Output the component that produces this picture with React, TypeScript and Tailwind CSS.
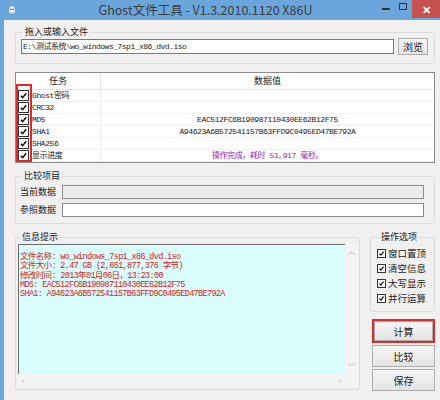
import React from "react";

const ui = "font-['Noto_Sans_CJK_SC','Noto_Sans',sans-serif]";
const mono = "font-['Liberation_Mono','Noto_Sans_CJK_SC',monospace]";

type Row = { name: string; value?: string; purple?: boolean };

const rows: Row[] = [
  { name: "Ghost密码" },
  { name: "CRC32" },
  { name: "MD5", value: "EAC512FC6B190987110430EE62B12F75" },
  { name: "SHA1", value: "A94623A6B572541157B63FFD9C0495ED47BE792A" },
  { name: "SHA256" },
  { name: "显示进度", value: "操作完成，耗时 51,917 毫秒。", purple: true },
];

const infoLines = [
  "文件名称: wo_windows_7sp1_x86_dvd.iso",
  "文件大小: 2.47 GB (2,651,877,376 字节)",
  "修改时间: 2013年01月06日，13:23:00",
  "MD5: EAC512FC6B190987110430EE62B12F75",
  "SHA1: A94623A6B572541157B63FFD9C0495ED47BE792A",
];

const options = ["窗口置顶", "清空信息", "大写显示", "并行运算"];

function Check({ size = "w-[11px] h-[11px]" }: { size?: string }) {
  return (
    <span className={`${size} shrink-0 border border-[#333] bg-white flex items-center justify-center`}>
      <svg viewBox="0 0 10 10" className="w-full h-full">
        <path d="M2 5.2 L4.1 7.4 L8 2.4" fill="none" stroke="#111" strokeWidth="1.7" />
      </svg>
    </span>
  );
}

function Btn({ label, className = "" }: { label: string; className?: string }) {
  return (
    <div
      className={`flex items-center justify-center border border-[#adadad] bg-gradient-to-b from-[#f6f6f6] to-[#e3e3e3] text-[10px] text-[#222] ${className}`}
    >
      {label}
    </div>
  );
}

export default function App() {
  return (
    <div className={`w-[440px] h-[400px] overflow-hidden flex flex-col bg-[#6aa5dc] ${ui}`}>
      {/* title bar */}
      <div className="h-[20px] flex items-center relative shrink-0">
        <svg viewBox="0 0 12 12" className="w-[10px] h-[10px] ml-[7px]">
          <path d="M6 1 C3 1 2 3.5 2 6 L2 11 L4 9.5 L6 11 L8 9.5 L10 11 L10 6 C10 3.5 9 1 6 1Z" fill="#e9f3fb" stroke="#5d8bb3" strokeWidth="0.8" />
          <circle cx="4.6" cy="5" r="0.9" fill="#335" />
          <circle cx="7.4" cy="5" r="0.9" fill="#335" />
        </svg>
        <div className="flex-1 text-center text-[12.5px] text-[#3d3d3d] -ml-[6px] pr-[40px] leading-none">
          Ghost文件工具 - V1.3.2010.1120 X86U
        </div>
        <div className="absolute right-[50px] top-[8px] w-[8px] h-[2px] bg-[#333]" />
        <div className="absolute right-[33px] top-[3px] w-[8px] h-[7px] border border-[#333]" />
        <div className="absolute right-0 top-0 w-[28px] h-[18px] bg-[#c75050] flex items-center justify-center text-white text-[11px] font-bold">
          ✕
        </div>
      </div>

      {/* body */}
      <div className="flex-1 ml-[4px] bg-[#f0f0f0] pl-[11px] pr-[5px] pt-[6px] flex flex-col text-[9px] text-[#1a1a1a]">
        <fieldset className="border border-[#dcdcdc] rounded-[2px] pl-[5px] pr-[6px] pb-[8px]">
          <legend className="ml-[2px] px-[2px] leading-[12px]">拖入或输入文件</legend>
          <div className="flex items-center gap-[4px]">
            <div className={`w-[373px] h-[15px] bg-white border border-[#7a7a7a] flex items-center pl-[1px] text-[8px] tracking-[-0.5px] ${mono}`}>
              E:\测试系统\wo_windows_7sp1_x86_dvd.iso
            </div>
            <Btn label="浏览" className="w-[30px] h-[17px]" />
          </div>
        </fieldset>

        {/* list view */}
        <div className="mt-[8px] h-[91px] border border-[#8c8c8c] bg-white relative">
          <div className="h-[17px] flex border-b border-[#e5e5e5] text-[9px]">
            <div className="w-[85px] border-r border-[#e5e5e5] flex items-center justify-center">任务</div>
            <div className="flex-1 flex items-center justify-center">数据值</div>
          </div>
          {rows.map((r) => (
            <div key={r.name} className={`h-[12px] flex border-b border-[#f2f2f2] text-[8px] tracking-[-0.4px] ${mono}`}>
              <div className="w-[85px] border-r border-[#ececec] flex items-center pl-[2px] gap-[3px]">
                <Check />
                <span className="text-[#222]">{r.name}</span>
              </div>
              <div
                className={`flex-1 flex items-center justify-center ${r.purple ? "text-[#a020b0]" : "text-[#222]"}`}
              >
                {r.value}
              </div>
            </div>
          ))}
          <div className="absolute left-0 top-[11px] w-[16px] h-[78px] border-2 border-[#e02828]" />
        </div>

        {/* compare */}
        <fieldset className="mt-[7px] border border-[#dcdcdc] rounded-[2px] pl-[4px] pr-[10px] pb-[6px] flex flex-col gap-[4px]">
          <legend className="ml-[2px] px-[2px] leading-[12px]">比较项目</legend>
          <div className="flex items-center mt-[3px]">
            <span className="w-[42px]">当前数据</span>
            <div className="flex-1 h-[14px] bg-[#ececec] border border-[#8a8a8a]" />
          </div>
          <div className="flex items-center">
            <span className="w-[42px]">参照数据</span>
            <div className="flex-1 h-[14px] bg-white border border-[#8a8a8a]" />
          </div>
        </fieldset>

        {/* bottom */}
        <div className="mt-[7px] flex">
          <fieldset className="w-[345px] h-[159px] border border-[#dcdcdc] rounded-[2px] pl-[2px] pr-[1px] pt-[1px]">
            <legend className="ml-[2px] px-[2px] leading-[12px]">信息提示</legend>
            <div className="w-[340px] h-[143px] flex flex-col bg-[#f4f4f4]">
              <div className="flex h-[130px]">
                <div
                  className={`w-[327px] h-full bg-[#d9fdfd] border-t border-l border-[#6d6d6d] pt-[8px] pl-[1px] text-[8.5px] leading-[9.3px] tracking-[-0.65px] text-[#d42020] ${mono}`}
                >
                  {infoLines.map((l) => (
                    <div key={l} className="whitespace-nowrap">
                      {l}
                    </div>
                  ))}
                </div>
                <div className="flex-1 flex flex-col justify-between items-center text-[#a9a9a9] text-[8px] py-[1px]">
                  <span>︿</span>
                  <span>﹀</span>
                </div>
              </div>
              <div className="flex-1 flex items-center justify-between px-[4px] w-[327px] text-[#a9a9a9] text-[9px]">
                <span>‹</span>
                <span>›</span>
              </div>
            </div>
          </fieldset>

          <div className="ml-[10px] flex-1 flex flex-col">
            <fieldset className="border border-[#dcdcdc] rounded-[2px] pl-[6px] pt-[3px] pb-[5px]">
              <legend className="ml-[2px] px-[2px] leading-[12px]">操作选项</legend>
              {options.map((o) => (
                <div key={o} className="h-[15px] flex items-center gap-[2px] text-[9.5px]">
                  <Check size="w-[9px] h-[9px]" />
                  <span>{o}</span>
                </div>
              ))}
            </fieldset>
            <div className="mt-[7px] ml-[2px] border-2 border-[#e02828] h-[24px]">
              <Btn label="计算" className="w-full h-full" />
            </div>
            <Btn label="比较" className="mt-[2px] ml-[2px] h-[22px]" />
            <Btn label="保存" className="mt-[2px] ml-[2px] h-[22px]" />
          </div>
        </div>
      </div>
    </div>
  );
}
